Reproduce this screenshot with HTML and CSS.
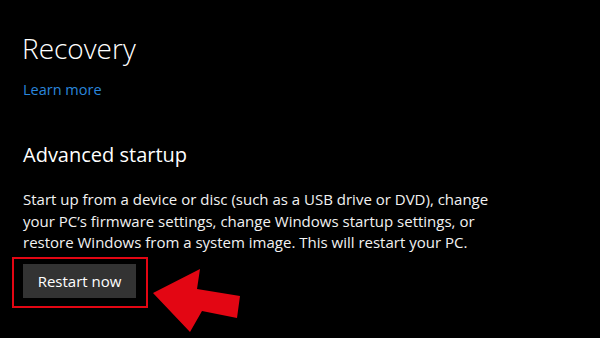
FILE: index.html
```html
<!DOCTYPE html>
<html lang="en">
<head>
    <meta charset="UTF-8">
    <meta name="viewport" content="width=device-width, initial-scale=1.0">
    <title>Recovery</title>
    <link rel="stylesheet" href="styles.css">
</head>
<body>
    <div class="page">
        <h1>Recovery</h1>
        <a class="link" href="#">Learn more</a>

        <h2>Advanced startup</h2>
        <p class="desc">Start up from a device or disc (such as a USB drive or DVD), change your PC&rsquo;s firmware settings, change Windows startup settings, or restore Windows from a system image. This will restart your PC.</p>

        <div class="action-row">
            <div class="highlight">
                <button class="btn">Restart now</button>
            </div>
            <!-- annotation arrow pointing at the button -->
            <svg class="arrow" width="100" height="83" viewBox="150 255 100 83">
                <polygon points="153,291 200,267 197,287 240,294 237,316 202,309 190,330" fill="#e30613"/>
            </svg>
        </div>
    </div>
</body>
</html>
```

FILE: styles.css
```css
html, body {
    margin: 0;
    background-color: #000;
    height: 100%;
    overflow: hidden;
}

body {
    font-family: 'Open Sans', 'Noto Sans', sans-serif;
    color: #fff;
}

.page {
    padding: 26px 0 0 22px;
}

h1 {
    margin: 0;
    font-size: 28px;
    font-weight: 300;
    line-height: 44px;
}

.link {
    display: inline-block;
    margin-top: 10px;
    margin-left: 1px;
    color: #2a86dc;
    font-size: 14.5px;
    line-height: 20px;
    text-decoration: none;
}

h2 {
    margin: 41px 0 0 1px;
    font-size: 20px;
    font-weight: 400;
    line-height: 28px;
}

.desc {
    margin: 20px 0 0 1px;
    width: 480px;
    font-size: 15px;
    line-height: 21.5px;
    color: #f2f2f2;
}

.action-row {
    display: flex;
    align-items: flex-start;
    margin-top: 3px;
    margin-left: -10px;
}

.highlight {
    border: 2px solid #e30613;
    padding: 5px 10px 8px 9px;
}

.btn {
    display: block;
    width: 113px;
    height: 34px;
    background-color: #333;
    color: #fff;
    border: none;
    font-family: inherit;
    font-size: 15px;
    padding: 0;
}

.arrow {
    display: block;
    margin-left: 2px;
}
```
